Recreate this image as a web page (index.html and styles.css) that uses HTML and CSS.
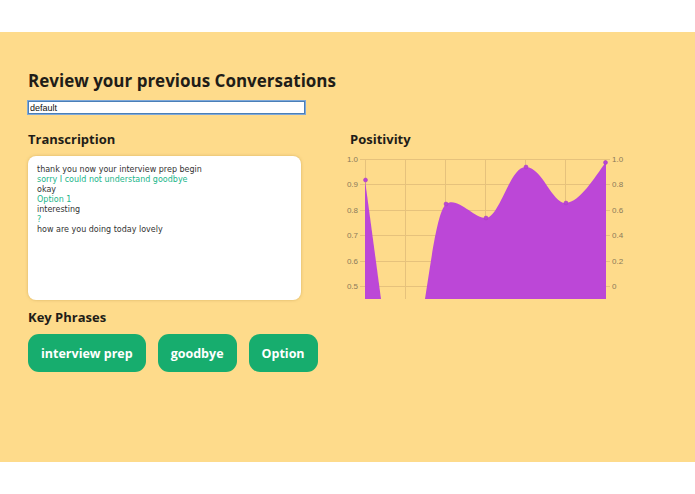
FILE: index.html
```html
<!DOCTYPE html>
<html>
<head>
<meta charset="utf-8">
<link rel="stylesheet" href="styles.css">
</head>
<body>
<div class="band">
  <h1 class="title">Review your previous Conversations</h1>
  <input class="search" type="text" value="default">
  <div class="cols">
    <div class="left">
      <h2 class="sub">Transcription</h2>
      <div class="transcript">
        <div class="line">thank you now your interview prep begin</div>
        <div class="line bot">sorry I could not understand goodbye</div>
        <div class="line">okay</div>
        <div class="line bot">Option 1</div>
        <div class="line">interesting</div>
        <div class="line bot">?</div>
        <div class="line">how are you doing today lovely</div>
      </div>
      <h2 class="sub kp">Key Phrases</h2>
      <div class="chips">
        <span class="chip">interview prep</span>
        <span class="chip">goodbye</span>
        <span class="chip">Option</span>
      </div>
    </div>
    <div class="right">
      <h2 class="sub">Positivity</h2>
      <svg class="chart" width="285" height="152" viewBox="345 150 285 152">
        <defs>
          <clipPath id="plot"><rect x="365" y="150" width="241" height="149"/></clipPath>
        </defs>
        <g class="grid">
          <line x1="360" y1="159.5" x2="610" y2="159.5"/>
          <line x1="360" y1="184.5" x2="610" y2="184.5"/>
          <line x1="360" y1="210.5" x2="610" y2="210.5"/>
          <line x1="360" y1="235.5" x2="610" y2="235.5"/>
          <line x1="360" y1="261.5" x2="610" y2="261.5"/>
          <line x1="360" y1="286.5" x2="610" y2="286.5"/>
          <line x1="365.5" y1="159" x2="365.5" y2="299"/>
          <line x1="405.5" y1="159" x2="405.5" y2="299"/>
          <line x1="445.5" y1="159" x2="445.5" y2="299"/>
          <line x1="485.5" y1="159" x2="485.5" y2="299"/>
          <line x1="525.5" y1="159" x2="525.5" y2="299"/>
          <line x1="565.5" y1="159" x2="565.5" y2="299"/>
          <line x1="605.5" y1="159" x2="605.5" y2="299"/>
        </g>
        <g class="area" clip-path="url(#plot)">
          <path d="M365,299 L365,180 L381,299 Z"/>
          <path d="M425,299 C431,262 437,212 446,204 C458,196 474,219 486,218 C500,217 510,166 526,167 C543,168 552,204 566,203 C580,202 594,178 606,162 L606,299 Z"/>
        </g>
        <g class="pts">
          <circle cx="365.5" cy="180" r="2"/>
          <circle cx="446" cy="204" r="2"/>
          <circle cx="486" cy="218" r="2"/>
          <circle cx="526" cy="167" r="2"/>
          <circle cx="566" cy="203" r="2"/>
          <circle cx="605.5" cy="162.5" r="2"/>
        </g>
        <g class="ylab left-lab">
          <text x="358" y="162">1.0</text>
          <text x="358" y="187">0.9</text>
          <text x="358" y="213">0.8</text>
          <text x="358" y="238">0.7</text>
          <text x="358" y="264">0.6</text>
          <text x="358" y="289">0.5</text>
        </g>
        <g class="ylab right-lab">
          <text x="612" y="162">1.0</text>
          <text x="612" y="187">0.8</text>
          <text x="612" y="213">0.6</text>
          <text x="612" y="238">0.4</text>
          <text x="612" y="264">0.2</text>
          <text x="612" y="289">0</text>
        </g>
      </svg>
    </div>
  </div>
</div>
</body>
</html>
```

FILE: styles.css
```css
html, body {
  margin: 0;
  padding: 0;
  background: #ffffff;
}

body {
  font-family: "DejaVu Sans", Verdana, sans-serif;
  color: #1f1d18;
}

.band {
  margin-top: 32px;
  height: 430px;
  box-sizing: border-box;
  background: #fedb8b;
  padding: 37px 28px 0 28px;
}

.title {
  margin: 0;
  font-family: "Open Sans", "DejaVu Sans", sans-serif;
  font-size: 17px;
  font-weight: 700;
  line-height: 24px;
}

.search {
  display: block;
  margin: 8px 0 0 0;
  width: 277px;
  height: 13px;
  box-sizing: border-box;
  border: 1px solid #4a7fb8;
  outline: 1px solid #7fa8d8;
  padding: 0 1px;
  font-family: "Liberation Sans", Arial, sans-serif;
  font-size: 9px;
  color: #111;
  background: #fff;
}

.cols {
  display: flex;
  gap: 49px;
  margin-top: 16px;
}

.left {
  width: 273px;
}

.right {
  width: 285px;
}

.sub {
  margin: 0;
  font-family: "Open Sans", "DejaVu Sans", sans-serif;
  font-size: 13px;
  font-weight: 700;
  line-height: 18px;
}

.transcript {
  margin-top: 8px;
  height: 144px;
  box-sizing: border-box;
  background: #fff;
  border-radius: 8px;
  box-shadow: 0 0 3px rgba(180, 140, 60, 0.5);
  padding: 9px 9px;
  font-size: 8px;
  line-height: 10px;
  color: #333;
}

.line.bot {
  color: #22b58a;
}

.kp {
  margin-top: 8px;
}

.chips {
  display: flex;
  gap: 12px;
  margin-top: 8px;
}

.chip {
  display: inline-flex;
  align-items: center;
  white-space: nowrap;
  height: 38px;
  padding: 0 13px;
  background: #17ad6e;
  color: #fff;
  border-radius: 11px;
  font-family: "Open Sans", "DejaVu Sans", sans-serif;
  font-size: 12.5px;
  font-weight: 700;
}

.chart {
  display: block;
  margin-left: -5px;
  margin-top: 2px;
}

.grid line {
  stroke: #e6c27c;
  stroke-width: 1;
}

.area path {
  fill: #bc47d7;
}

.pts circle {
  fill: #b945d3;
  stroke: #a93ac2;
  stroke-width: 0.5;
}

.ylab text {
  font-family: "Liberation Sans", Arial, sans-serif;
  font-size: 8px;
  fill: #8a7a5a;
}

.left-lab text {
  text-anchor: end;
}
```
